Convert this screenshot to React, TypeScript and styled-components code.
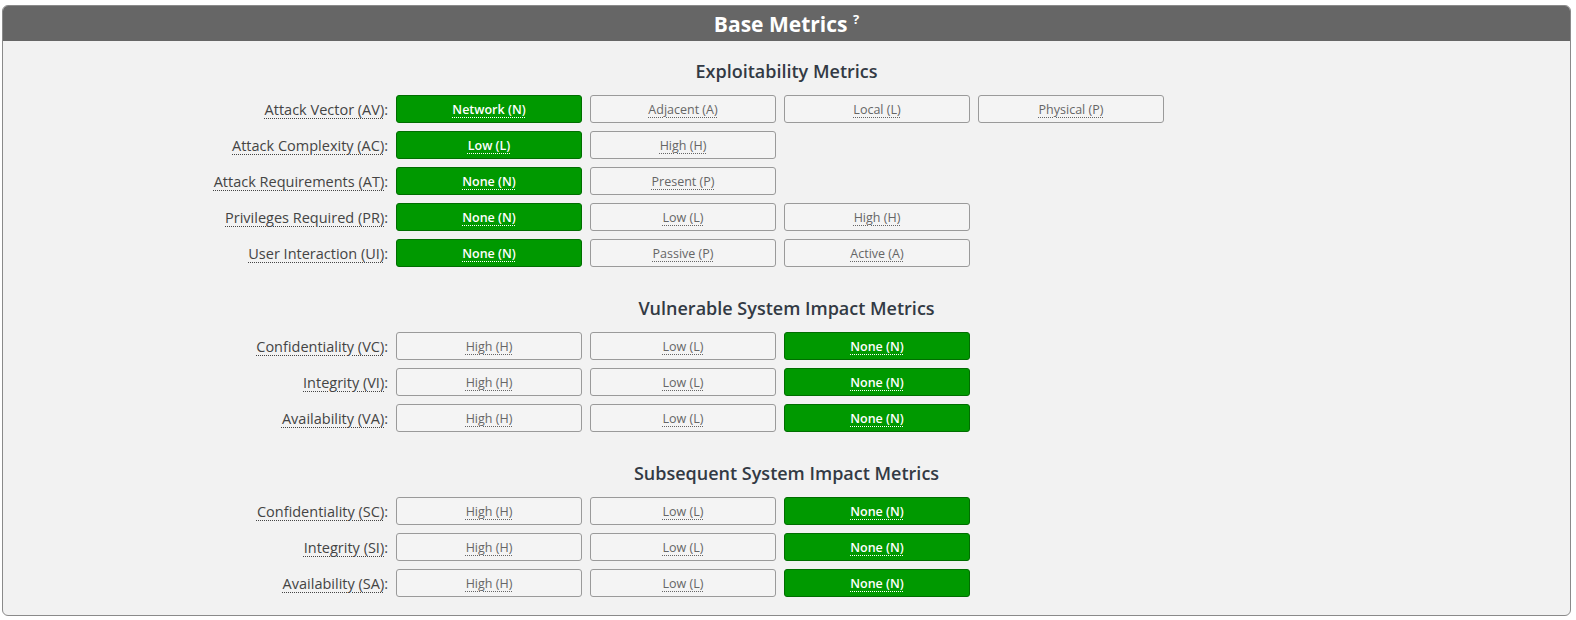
import React from 'react';
import styled, { createGlobalStyle } from 'styled-components';

const GlobalStyle = createGlobalStyle`
  body {
    margin: 0;
    background: #ffffff;
    font-family: 'Open Sans', 'Noto Sans', sans-serif;
  }
`;

type Metric = { label: string; options: string[]; selected: number };
type Section = { title: string; metrics: Metric[] };

const impact = (label: string): Metric => ({
  label,
  options: ['High (H)', 'Low (L)', 'None (N)'],
  selected: 2,
});

const sections: Section[] = [
  {
    title: 'Exploitability Metrics',
    metrics: [
      { label: 'Attack Vector (AV)', options: ['Network (N)', 'Adjacent (A)', 'Local (L)', 'Physical (P)'], selected: 0 },
      { label: 'Attack Complexity (AC)', options: ['Low (L)', 'High (H)'], selected: 0 },
      { label: 'Attack Requirements (AT)', options: ['None (N)', 'Present (P)'], selected: 0 },
      { label: 'Privileges Required (PR)', options: ['None (N)', 'Low (L)', 'High (H)'], selected: 0 },
      { label: 'User Interaction (UI)', options: ['None (N)', 'Passive (P)', 'Active (A)'], selected: 0 },
    ],
  },
  {
    title: 'Vulnerable System Impact Metrics',
    metrics: [impact('Confidentiality (VC)'), impact('Integrity (VI)'), impact('Availability (VA)')],
  },
  {
    title: 'Subsequent System Impact Metrics',
    metrics: [impact('Confidentiality (SC)'), impact('Integrity (SI)'), impact('Availability (SA)')],
  },
];

export default function App() {
  return (
    <>
      <GlobalStyle />
      <StyledPage>
        <StyledPanel>
          <StyledHeader>
            Base Metrics <StyledHelp>?</StyledHelp>
          </StyledHeader>
          <StyledBody>
            {sections.map(section => (
              <StyledSection key={section.title}>
                <StyledSectionTitle>{section.title}</StyledSectionTitle>
                {section.metrics.map(metric => (
                  <StyledRow key={metric.label}>
                    <StyledLabel>
                      <StyledAbbr>{metric.label}</StyledAbbr>:
                    </StyledLabel>
                    <StyledOptions>
                      {metric.options.map((option, i) => (
                        <StyledButton key={option} $active={i === metric.selected}>
                          <StyledAbbr>{option}</StyledAbbr>
                        </StyledButton>
                      ))}
                    </StyledOptions>
                  </StyledRow>
                ))}
              </StyledSection>
            ))}
          </StyledBody>
        </StyledPanel>
      </StyledPage>
    </>
  );
}

const StyledPage = styled.div`
  padding: 5px 5px 0 2px;
`;

const StyledPanel = styled.div`
  border: 1px solid #8a8a8a;
  border-radius: 6px;
  overflow: hidden;
  background: #f2f2f2;
`;

const StyledHeader = styled.div`
  height: 35px;
  background: #666666;
  color: #ffffff;
  font-weight: 700;
  font-size: 21px;
  line-height: 36px;
  text-align: center;
`;

const StyledHelp = styled.sup`
  font-size: 13px;
  vertical-align: 8px;
  line-height: 0;
`;

const StyledBody = styled.div`
  padding: 18px 0 10px;
`;

const StyledSection = styled.div`
  & + & {
    margin-top: 29px;
  }
`;

const StyledSectionTitle = styled.div`
  text-align: center;
  font-weight: 600;
  font-size: 18px;
  line-height: 24px;
  color: #333a44;
  margin-bottom: 12px;
`;

const StyledRow = styled.div`
  display: grid;
  grid-template-columns: 385px 1fr;
  column-gap: 8px;
  margin-bottom: 8px;
  align-items: center;
`;

const StyledLabel = styled.div`
  text-align: right;
  font-size: 14.5px;
  color: #444;
`;

const StyledAbbr = styled.span`
  text-decoration: underline dotted;
  text-decoration-thickness: 1px;
  text-underline-offset: 3px;
`;

const StyledOptions = styled.div`
  display: flex;
  gap: 8px;
`;

const StyledButton = styled.div<{ $active: boolean }>`
  box-sizing: border-box;
  width: 186px;
  height: 28px;
  border-radius: 3px;
  border: 1px solid ${({ $active }) => ($active ? '#006e00' : '#9a9a9a')};
  background: ${({ $active }) => ($active ? '#009900' : '#f4f4f4')};
  color: ${({ $active }) => ($active ? '#ffffff' : '#666666')};
  font-weight: ${({ $active }) => ($active ? 600 : 400)};
  font-size: 12.5px;
  display: flex;
  align-items: center;
  justify-content: center;
`;
